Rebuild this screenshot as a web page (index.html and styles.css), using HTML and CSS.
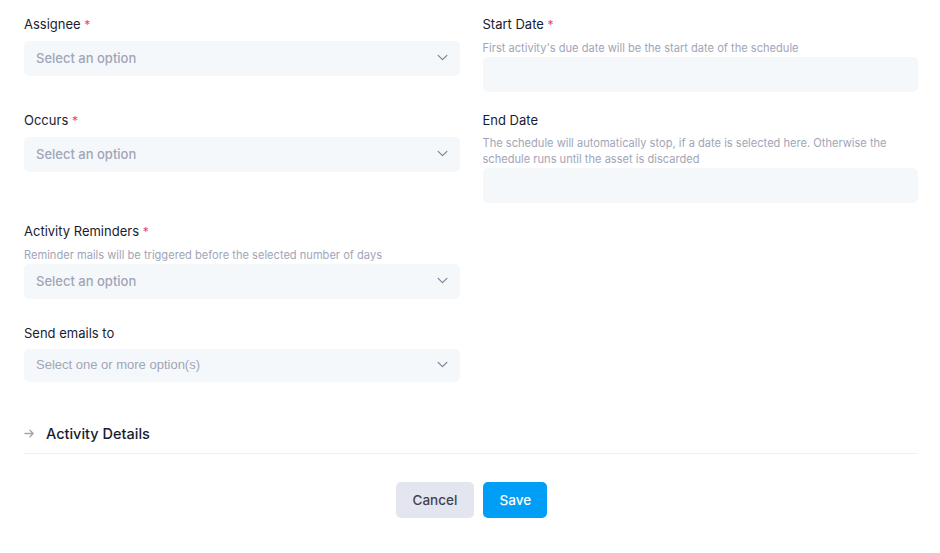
FILE: index.html
```html
<!DOCTYPE html>
<html>
  <head>
    <meta charset="UTF-8" />
    <meta name="viewport" content="width=device-width, initial-scale=1.0" />
    <title>Schedule</title>
    <link rel="stylesheet" href="styles.css">
  </head>
  <body>
    <form class="schedule-form">
      <div class="form-grid">
        <!-- 第一行 -->
        <div class="field">
          <label class="field-label">Assignee <span class="req">*</span></label>
          <div class="select-box">
            <span class="placeholder">Select an option</span>
            <svg class="chevron" viewBox="0 0 12 8"><path d="M1 1.5l5 5 5-5" /></svg>
          </div>
        </div>
        <div class="field">
          <label class="field-label">Start Date <span class="req">*</span></label>
          <div class="field-help">First activity's due date will be the start date of the schedule</div>
          <div class="input-box"></div>
        </div>

        <!-- 第二行 -->
        <div class="field">
          <label class="field-label">Occurs <span class="req">*</span></label>
          <div class="select-box">
            <span class="placeholder">Select an option</span>
            <svg class="chevron" viewBox="0 0 12 8"><path d="M1 1.5l5 5 5-5" /></svg>
          </div>
        </div>
        <div class="field">
          <label class="field-label">End Date</label>
          <div class="field-help">The schedule will automatically stop, if a date is selected here. Otherwise the schedule runs until the asset is discarded</div>
          <div class="input-box"></div>
        </div>

        <!-- 第三行 -->
        <div class="field">
          <label class="field-label">Activity Reminders <span class="req">*</span></label>
          <div class="field-help">Reminder mails will be triggered before the selected number of days</div>
          <div class="select-box">
            <span class="placeholder">Select an option</span>
            <svg class="chevron" viewBox="0 0 12 8"><path d="M1 1.5l5 5 5-5" /></svg>
          </div>
        </div>
        <div></div>

        <div class="field field-emails">
          <label class="field-label">Send emails to</label>
          <div class="select-box select-multi">
            <span class="placeholder placeholder-plain">Select one or more option(s)</span>
            <svg class="chevron" viewBox="0 0 12 8"><path d="M1 1.5l5 5 5-5" /></svg>
          </div>
        </div>
        <div></div>
      </div>

      <div class="section-toggle">
        <svg class="toggle-arrow" viewBox="0 0 12 12"><path d="M1 6h9M6.5 2.5L10 6l-3.5 3.5" /></svg>
        <span>Activity Details</span>
      </div>

      <div class="form-actions">
        <button type="button" class="btn btn-light">Cancel</button>
        <button type="button" class="btn btn-primary">Save</button>
      </div>
    </form>
  </body>
</html>
```

FILE: styles.css
```css
body {
  margin: 0;
  padding: 0;
  background: #ffffff;
  font-family: Inter, "Noto Sans", sans-serif;
  color: #181c32;
}

.schedule-form {
  padding: 14px 22px 0 24px;
}

.form-grid {
  display: grid;
  grid-template-columns: 1fr 1fr;
  column-gap: 23px;
  row-gap: 18px;
  align-items: start;
}

.field {
  display: flex;
  flex-direction: column;
}

.field-label {
  font-size: 13px;
  line-height: 20px;
  font-weight: 400;
  color: #181c32;
  margin-bottom: 6px;
}

.field-label:has(+ .field-help) {
  margin-bottom: 5px;
}

.req {
  color: #f1416c;
  font-size: 12px;
}

.field-help {
  font-size: 11.1px;
  line-height: 16px;
  color: #a1a5b7;
  margin-bottom: 1px;
}

.select-box,
.input-box {
  height: 35px;
  background: #f5f8fa;
  border-radius: 5px;
  box-sizing: border-box;
}

.select-box {
  display: flex;
  align-items: center;
  justify-content: space-between;
  padding: 0 12px 2px 12px;
}

.placeholder {
  font-size: 13px;
  font-weight: 500;
  color: #a1a5b7;
}

.placeholder-plain {
  font-family: "Liberation Sans", Arial, sans-serif;
  font-weight: 400;
}

.chevron {
  width: 11px;
  height: 7px;
  fill: none;
  stroke: #7e8299;
  stroke-width: 1.4;
  stroke-linecap: round;
  stroke-linejoin: round;
}

.field-emails {
  margin-top: 6px;
}

.select-multi {
  height: 33px;
}

.section-toggle {
  display: flex;
  align-items: center;
  gap: 11px;
  margin-top: 43px;
  padding-bottom: 11px;
  border-bottom: 1px solid #eff2f5;
  font-size: 14.5px;
  font-weight: 500;
  color: #181c32;
}

.toggle-arrow {
  width: 11px;
  height: 11px;
  fill: none;
  stroke: #a1a5b7;
  stroke-width: 1.5;
  stroke-linecap: round;
  stroke-linejoin: round;
}

.form-actions {
  display: flex;
  justify-content: center;
  gap: 9px;
  margin-top: 28px;
}

.btn {
  height: 36px;
  border: none;
  border-radius: 5px;
  padding: 0 17px;
  font-family: inherit;
  font-size: 13.5px;
  font-weight: 500;
  cursor: pointer;
}

.btn-light {
  background: #e4e6ef;
  color: #3f4254;
  width: 78px;
}

.btn-primary {
  background: #009ef7;
  color: #ffffff;
  width: 64px;
}
```
